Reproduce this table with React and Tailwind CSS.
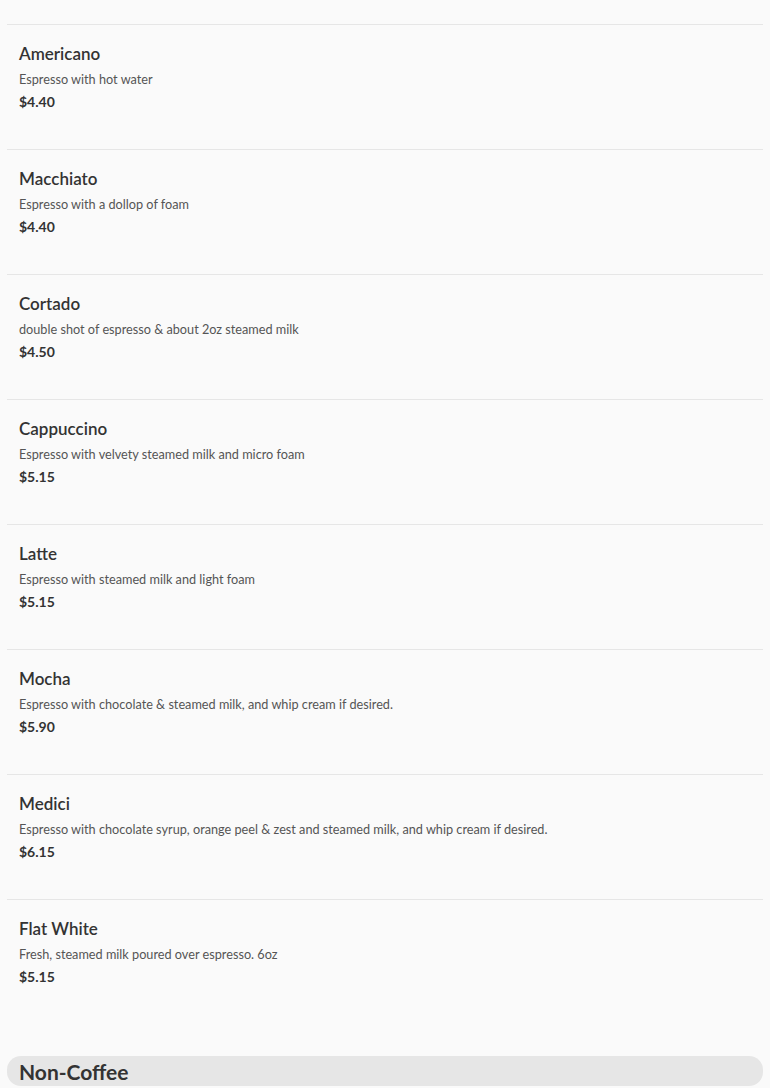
import React from 'react';

const drinks = [
  { name: 'Americano', desc: 'Espresso with hot water', price: '$4.40' },
  { name: 'Macchiato', desc: 'Espresso with a dollop of foam', price: '$4.40' },
  { name: 'Cortado', desc: 'double shot of espresso & about 2oz steamed milk', price: '$4.50' },
  { name: 'Cappuccino', desc: 'Espresso with velvety steamed milk and micro foam', price: '$5.15' },
  { name: 'Latte', desc: 'Espresso with steamed milk and light foam', price: '$5.15' },
  { name: 'Mocha', desc: 'Espresso with chocolate & steamed milk, and whip cream if desired.', price: '$5.90' },
  {
    name: 'Medici',
    desc: 'Espresso with chocolate syrup, orange peel & zest and steamed milk, and whip cream if desired.',
    price: '$6.15',
  },
  { name: 'Flat White', desc: 'Fresh, steamed milk poured over espresso. 6oz', price: '$5.15' },
];

function MenuItem({ item, last }) {
  return (
    <div className={`border-t border-[#e6e6e6] pl-3 pt-[17px] ${last ? 'h-[157px]' : 'h-[125px]'}`}>
      <h3 className="text-[17px] leading-6 font-semibold text-[#333]">{item.name}</h3>
      <p className="mt-1 text-[12.7px] leading-[18px] text-[#555]">{item.desc}</p>
      <p className="mt-1 text-[14px] leading-5 font-bold text-[#333]">{item.price}</p>
    </div>
  );
}

export default function App() {
  return (
    <div className="min-h-screen bg-[#fafafa] px-[7px] font-['Lato','Liberation_Sans',sans-serif]">
      <div className="h-6" />
      {drinks.map((d, i) => (
        <MenuItem key={d.name} item={d} last={i === drinks.length - 1} />
      ))}
      <div className="h-[30px] rounded-[14px] bg-[#e6e6e6] pl-3 flex items-center">
        <h2 className="text-[21px] font-bold text-[#333] leading-none">Non-Coffee</h2>
      </div>
    </div>
  );
}
